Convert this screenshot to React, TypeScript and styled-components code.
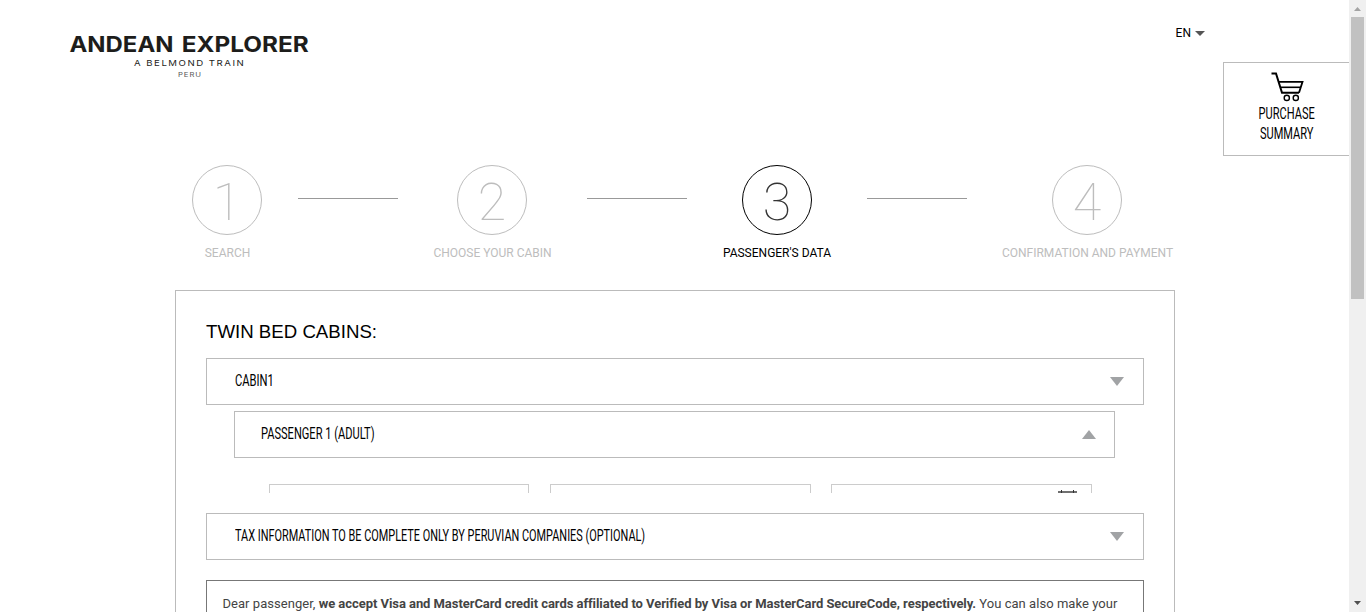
import React from "react";
import styled, { createGlobalStyle } from "styled-components";

const GlobalStyle = createGlobalStyle`
  * { box-sizing: border-box; }
  body { margin: 0; overflow: hidden; background: #fff; font-family: Roboto, sans-serif; color: #000; }
`;

const Frame = styled.div`
  display: flex;
  height: 612px;
  overflow: hidden;
`;

const Page = styled.main`
  position: relative;
  width: 1349px;
  height: 612px;
  overflow: hidden;
`;

const Header = styled.header`
  display: flex;
  justify-content: space-between;
  height: 165px;
  padding: 25px 144px 0 60px;
`;

const Logo = styled.svg`
  display: block;
  width: 260px;
  height: 60px;
`;

const Language = styled.div`
  display: flex;
  align-items: center;
  gap: 4px;
  height: 16px;
  font-size: 12px;
`;

const LanguageArrow = styled.span`
  border: 5px solid transparent;
  border-top-color: #555;
  border-bottom: 0;
`;

const Summary = styled.aside`
  position: absolute;
  top: 62px;
  right: 0;
  width: 126px;
  height: 94px;
  padding-top: 8px;
  border: 1px solid #bbb;
  border-right: 0;
  background: #fff;
  display: flex;
  flex-direction: column;
  align-items: center;
`;

const Cart = styled.svg`
  width: 34px;
  height: 32px;
  margin-bottom: 1px;
`;

const Narrow = styled.span<{ $scale: number; $center?: boolean }>`
  display: inline-block;
  white-space: nowrap;
  font-size: 16px;
  line-height: 20px;
  transform: scaleX(${(p) => p.$scale});
  transform-origin: ${(p) => (p.$center ? "center" : "left")};
`;

const Steps = styled.nav`
  display: grid;
  grid-template-columns: 142px 100px 188px 101px 180px 100px 240px;
  padding-left: 156px;
  height: 125px;
`;

const Step = styled.div<{ $active?: boolean }>`
  display: flex;
  flex-direction: column;
  align-items: center;
  color: ${(p) => (p.$active ? "#000" : "#bdbdbd")};
`;

const Circle = styled.div`
  width: 70px;
  height: 70px;
  border: 1px solid currentColor;
  border-radius: 50%;
  font-size: 52px;
  font-weight: 100;
  line-height: 74px;
  text-align: center;
`;

const Digit = styled.span<{ $active?: boolean }>`
  color: ${(p) => (p.$active ? "#333" : "inherit")};
`;

const StepLabel = styled.div<{ $active?: boolean }>`
  margin-top: 10px;
  padding-left: ${(p) => (p.$active ? 0 : 1)}px;
  font-size: 12px;
  line-height: 16px;
  white-space: nowrap;
`;

const Connector = styled.div`
  justify-self: end;
  width: 100px;
  height: 1px;
  margin-top: 33px;
  background: #999;
`;

const Panel = styled.section`
  width: 1000px;
  height: 400px;
  margin-left: 175px;
  padding: 30px 30px 0;
  border: 1px solid #bbb;
`;

const Title = styled.h2`
  margin: 0 0 15px;
  font: 400 18.67px/22px "Liberation Sans", sans-serif;
`;

const Bar = styled.div<{ $nested?: boolean }>`
  display: flex;
  align-items: center;
  justify-content: space-between;
  height: 47px;
  margin: ${(p) => (p.$nested ? "6px 29px 0 28px" : "0")};
  padding: 0 ${(p) => (p.$nested ? "18px 2px 26px" : "19px 2px 28px")};
  border: 1px solid #bbb;
`;

const Arrow = styled.svg`
  width: 14px;
  height: 9px;
  margin-top: 1px;
  fill: #a1a3a5;
`;

const Fields = styled.div`
  display: grid;
  grid-template-columns: 260px 261px 261px;
  column-gap: 21px;
  height: 9px;
  margin: 26px 0 20px 63px;
  overflow: hidden;
`;

const Field = styled.div`
  display: flex;
  justify-content: flex-end;
  height: 40px;
  padding: 5px 14px 0 0;
  border: 1px solid #ccc;

  &:last-child { margin: 0 1px 0 -1px; }
`;

const Calendar = styled.svg`
  width: 19px;
  height: 20px;
`;

const Notice = styled.div`
  height: 120px;
  margin-top: 20px;
  padding: 13px 15.5px;
  border: 1px solid #777;
  color: #444;
  font-size: 13px;
  line-height: 20px;
  letter-spacing: 0.04px;
  white-space: nowrap;
`;

const Strong = styled.strong`
  font-weight: 700;
  letter-spacing: -0.055px;
`;

const Scrollbar = styled.div`
  display: flex;
  flex-direction: column;
  align-items: center;
  width: 17px;
  height: 612px;
  background: #f0f0f0;
`;

const ScrollButton = styled.svg`
  width: 17px;
  height: 17px;
`;

const Thumb = styled.div`
  width: 13px;
  height: 282px;
  margin-bottom: auto;
  background: #c1c1c1;
`;

const Toggle = ({ open }: { open?: boolean }) => (
  <Arrow viewBox="0 0 14 9">
    <path d={open ? "M0 9 7 0l7 9z" : "M0 0h14L7 9z"} />
  </Arrow>
);

const StepItem = ({ n, label, active }: { n: number; label: string; active?: boolean }) => (
  <Step $active={active}>
    <Circle><Digit $active={active}>{n}</Digit></Circle>
    <StepLabel $active={active}>{label}</StepLabel>
  </Step>
);

export default function App() {
  return (
    <Frame>
      <GlobalStyle />
      <Page>
        <Header>
          <Logo viewBox="0 0 260 60" fill="#1d1d1b" fontFamily="Inter, sans-serif">
            <text x="9.5" y="27.2" fontSize="21.5" fontWeight="700" textLength="104" lengthAdjust="spacingAndGlyphs">ANDEAN</text>
            <text x="121.8" y="27.2" fontSize="21.5" fontWeight="700" textLength="127" lengthAdjust="spacingAndGlyphs">EXPLORER</text>
            <text x="61.6" y="41" fontSize="8" fontWeight="400" transform="scale(1.2 1)" textLength="91.5">A BELMOND TRAIN</text>
            <text x="98.3" y="52" fontSize="6.4" transform="scale(1.2 1)" textLength="19.2" fill="#555">PERU</text>
          </Logo>
          <Language>EN<LanguageArrow /></Language>
        </Header>
        <Summary>
          <Cart viewBox="0 0 34 32" fill="none" stroke="#000">
            <path d="M1.5 2.5H6l6 19.2h17" strokeWidth="2" />
            <path d="M8.5 10.8h24l-3.500 10.9" strokeWidth="1.8" />
            <path d="M10.500 16.300h20.500" strokeWidth="1.6" />
            <circle cx="16.8" cy="26.9" r="2.6" strokeWidth="1.4" />
            <circle cx="25.8" cy="26.9" r="2.6" strokeWidth="1.4" />
          </Cart>
          <Narrow $scale={0.69} $center>PURCHASE</Narrow>
          <Narrow $scale={0.69} $center>SUMMARY</Narrow>
        </Summary>
        <Steps>
          <StepItem n={1} label="SEARCH" />
          <Connector />
          <StepItem n={2} label="CHOOSE YOUR CABIN" />
          <Connector />
          <StepItem n={3} label="PASSENGER'S DATA" active />
          <Connector />
          <StepItem n={4} label="CONFIRMATION AND PAYMENT" />
        </Steps>
        <Panel>
          <Title>TWIN BED CABINS:</Title>
          <Bar><Narrow $scale={0.7}>CABIN1</Narrow><Toggle /></Bar>
          <Bar $nested><Narrow $scale={0.692}>PASSENGER 1 (ADULT)</Narrow><Toggle open /></Bar>
          <Fields>
            <Field />
            <Field />
            <Field>
              <Calendar viewBox="0 0 19 20" fill="none" stroke="#333">
                <path d="M0 2h19" strokeWidth="1.4" />
                <path d="M3.5 0v3M15.5 0v3M.5 4v15.500h18V4" />
              </Calendar>
            </Field>
          </Fields>
          <Bar><Narrow $scale={0.681}>TAX INFORMATION TO BE COMPLETE ONLY BY PERUVIAN COMPANIES (OPTIONAL)</Narrow><Toggle /></Bar>
          <Notice>
            Dear passenger, <Strong>we accept Visa and MasterCard credit cards affiliated to Verified by Visa or MasterCard SecureCode, respectively.</Strong> You can also make your
          </Notice>
        </Panel>
      </Page>
      <Scrollbar>
        <ScrollButton viewBox="0 0 17 17"><path d="M5 11h7L8.5 7z" fill="#a3a3a3" /></ScrollButton>
        <Thumb />
        <ScrollButton viewBox="0 0 17 17"><path d="M5 6h7l-3.5 4z" fill="#505050" /></ScrollButton>
      </Scrollbar>
    </Frame>
  );
}
